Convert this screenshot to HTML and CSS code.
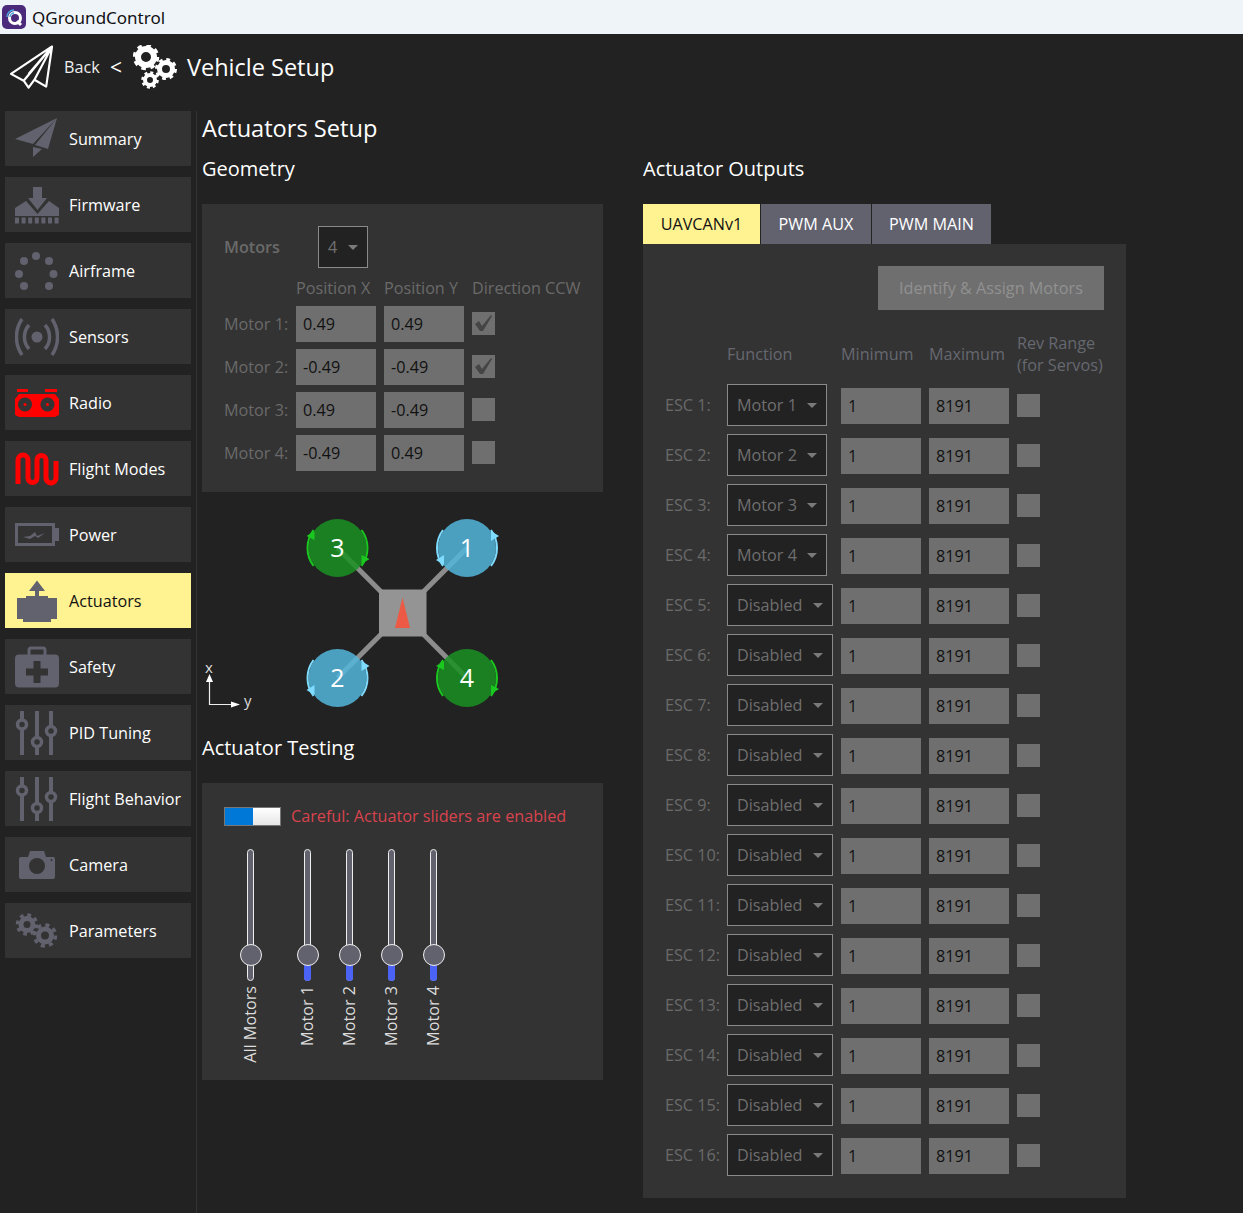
FILE: index.html
```html
<!DOCTYPE html>
<html lang="en">
<head>
  <meta charset="UTF-8">
  <meta name="viewport" content="width=device-width, initial-scale=1.0">
  <title>QGroundControl</title>
  <link rel="stylesheet" href="styles.css">
</head>
<body>

  <!-- window title -->
  <div class="titlebar">
    <svg class="app-logo" viewBox="0 0 24 24">
      <rect width="24" height="24" rx="5" fill="#4b2a7b"/>
      <circle cx="13" cy="13" r="5.5" fill="none" stroke="#fff" stroke-width="3"/>
      <path d="M15 16l4 4" stroke="#fff" stroke-width="3"/>
      <path d="M5 12a7 7 0 0 1 7-7M8 12a4 4 0 0 1 4-4" fill="none" stroke="#4aa8e0" stroke-width="1.5"/>
    </svg>
    <span>QGroundControl</span>
  </div>

  <!-- top toolbar -->
  <div class="toolbar">
    <svg class="toolbar-icon" viewBox="10 45 45 45">
      <path d="M53 46L11 74l13 7 5 7 6-8 12 7zM53 46L24 81M53 46L35 80M53 46L29 74" fill="none" stroke="#fff" stroke-width="2.2" stroke-linejoin="round"/>
    </svg>
    <span class="back">Back</span>
    <span class="chevron">&lt;</span>
    <svg class="toolbar-icon gears" viewBox="133 45 44 45">
      <circle cx="146" cy="57" r="8" fill="none" stroke="#fff" stroke-width="6"/>
      <circle cx="146" cy="57" r="11.5" fill="none" stroke="#fff" stroke-width="3.5" stroke-dasharray="4.5 4.53"/>
      <circle cx="166" cy="69" r="6.5" fill="none" stroke="#fff" stroke-width="5"/>
      <circle cx="166" cy="69" r="9.5" fill="none" stroke="#fff" stroke-width="3" stroke-dasharray="3.7 3.76"/>
      <circle cx="150" cy="80" r="5" fill="none" stroke="#fff" stroke-width="4"/>
      <circle cx="150" cy="80" r="7.5" fill="none" stroke="#fff" stroke-width="2.6" stroke-dasharray="3 2.89"/>
    </svg>
    <span class="toolbar-title">Vehicle Setup</span>
  </div>

  <div class="content">

    <div class="sidebar">
      <div class="nav-item">
        <svg class="nav-icon" viewBox="0 0 44 44"><path d="M42 1L0 22l18 5zM42 1L20 28l13 4zM18 30l9 2-9 8z"/></svg>
        <span>Summary</span>
      </div>
      <div class="nav-item">
        <svg class="nav-icon" viewBox="0 0 44 44"><path d="M18 4h9v11h5L22.500 27 13 15h5z"/><path d="M0 25l11-7 11.500 13L34 18l10 7v8H0z"/><path d="M0 37.500h44" stroke="#62616e" stroke-width="6" stroke-dasharray="4 2.600"/></svg>
        <span>Firmware</span>
      </div>
      <div class="nav-item">
        <svg class="nav-icon" viewBox="0 0 44 44">
          <circle cx="21" cy="7" r="4"/><circle cx="34" cy="12" r="4"/><circle cx="38.500" cy="25" r="4"/><circle cx="34" cy="37" r="4"/>
          <circle cx="9" cy="37" r="4"/><circle cx="4" cy="25" r="4"/><circle cx="9" cy="12" r="4"/>
        </svg>
        <span>Airframe</span>
      </div>
      <div class="nav-item">
        <svg class="nav-icon" viewBox="0 0 44 44">
          <circle cx="22" cy="22" r="5.500"/>
          <path d="M14 10a18 18 0 0 0 0 24M30 10a18 18 0 0 1 0 24M7 4a32 32 0 0 0 0 36M37 4a32 32 0 0 1 0 36" fill="none" stroke="#62616e" stroke-width="3.500"/>
        </svg>
        <span>Sensors</span>
      </div>
      <div class="nav-item">
        <svg class="nav-icon" viewBox="0 0 44 44">
          <path class="red" d="M2 8h11v3H2zM30 8h12v3H30zM4 13h36l4 5v16l-4 2H4l-4-2V18z"/>
          <circle cx="10" cy="23.500" r="7" fill="#333"/><circle cx="32.500" cy="23.500" r="7" fill="#333"/>
          <circle class="red" cx="10" cy="23.500" r="1.500"/><circle class="red" cx="32.500" cy="23.500" r="1.500"/>
        </svg>
        <span>Radio</span>
      </div>
      <div class="nav-item">
        <svg class="nav-icon" viewBox="0 0 44 44"><path d="M3 37V13a5 5 0 0 1 10 0V31a4.500 4.500 0 0 0 9 0V13a4.500 4.500 0 0 1 9 0V31a5 5 0 0 0 10 0V14" fill="none" stroke="#f00" stroke-width="5"/></svg>
        <span>Flight Modes</span>
      </div>
      <div class="nav-item">
        <svg class="nav-icon" viewBox="0 0 44 44">
          <path d="M0 10h40v5h4v13h-4v5H0zM3 13v17h34V13z" fill-rule="evenodd"/>
          <path d="M8 24l7-1 5-4 2 4 8-3-7 5-3-2-5 3z"/>
        </svg>
        <span>Power</span>
      </div>
      <div class="nav-item active">
        <svg class="nav-icon" viewBox="0 0 44 44"><path d="M22 1.500L30 12h-6v5h9v2h9v21h-6v3H8v-3H2V19h9v-2h9v-5h-6z"/></svg>
        <span>Actuators</span>
      </div>
      <div class="nav-item">
        <svg class="nav-icon" viewBox="0 0 44 44">
          <path d="M14 10V5a2 2 0 0 1 2-2h12a2 2 0 0 1 2 2v5" fill="none" stroke="#62616e" stroke-width="3"/>
          <rect y="9.500" width="44" height="33" rx="4"/>
          <path d="M18.500 16h7v7.500H33v7h-7.500V38h-7v-7.500H11v-7h7.500z" fill="#333"/>
        </svg>
        <span>Safety</span>
      </div>
      <div class="nav-item">
        <svg class="nav-icon" viewBox="0 0 44 44">
          <path class="line" d="M7 1v43M22 1v43M36 1v43"/>
          <circle class="knob" cx="7" cy="13.500" r="4.500"/><circle class="knob" cx="22" cy="31" r="4.500"/><circle class="knob" cx="36" cy="20" r="4.500"/>
        </svg>
        <span>PID Tuning</span>
      </div>
      <div class="nav-item">
        <svg class="nav-icon" viewBox="0 0 44 44">
          <path class="line" d="M7 1v43M22 1v43M36 1v43"/>
          <circle class="knob" cx="7" cy="13.500" r="4.500"/><circle class="knob" cx="22" cy="31" r="4.500"/><circle class="knob" cx="36" cy="20" r="4.500"/>
        </svg>
        <span>Flight Behavior</span>
      </div>
      <div class="nav-item">
        <svg class="nav-icon" viewBox="0 0 44 44">
          <path d="M6 14h7l2-6h14l2 6h7a2 2 0 0 1 2 2v18a2 2 0 0 1-2 2H6a2 2 0 0 1-2-2V16a2 2 0 0 1 2-2z"/>
          <circle cx="22" cy="23" r="8" fill="#333"/><circle cx="36.500" cy="17" r="1" fill="#333"/>
        </svg>
        <span>Camera</span>
      </div>
      <div class="nav-item">
        <svg class="nav-icon" viewBox="0 0 44 44">
          <g fill="none" stroke="#62616e">
            <circle cx="12" cy="15.500" r="6" stroke-width="5"/>
            <circle cx="12" cy="15.500" r="9.500" stroke-width="3.500" stroke-dasharray="3.700 3.760"/>
            <circle cx="30" cy="26.500" r="6.500" stroke-width="5"/>
            <circle cx="30" cy="26.500" r="10.500" stroke-width="3.500" stroke-dasharray="4.100 4.150"/>
          </g>
        </svg>
        <span>Parameters</span>
      </div>
    </div>

    <div class="main">
      <h1>Actuators Setup</h1>
      <div class="columns">

        <div class="col-left">
          <h2>Geometry</h2>
          <div class="panel geometry">
            <div class="motors-row">
              <span class="motors-label">Motors</span>
              <div class="select select-count"><span>4</span><i class="caret"></i></div>
            </div>
            <div class="geo-grid">
              <span></span><span class="muted">Position X</span><span class="muted">Position Y</span><span class="muted">Direction CCW</span>

              <span class="muted">Motor 1:</span>
              <input class="field" type="text" value="0.49" readonly>
              <input class="field" type="text" value="0.49" readonly>
              <span class="check"><svg viewBox="0 0 23 23"><path d="M3 12l4-3 3 5L19 3l1 1-9 15H8z"/></svg></span>

              <span class="muted">Motor 2:</span>
              <input class="field" type="text" value="-0.49" readonly>
              <input class="field" type="text" value="-0.49" readonly>
              <span class="check"><svg viewBox="0 0 23 23"><path d="M3 12l4-3 3 5L19 3l1 1-9 15H8z"/></svg></span>

              <span class="muted">Motor 3:</span>
              <input class="field" type="text" value="0.49" readonly>
              <input class="field" type="text" value="-0.49" readonly>
              <span class="check"></span>

              <span class="muted">Motor 4:</span>
              <input class="field" type="text" value="-0.49" readonly>
              <input class="field" type="text" value="0.49" readonly>
              <span class="check"></span>
            </div>
          </div>

          <!-- multirotor diagram, coordinates are page pixels -->
          <svg class="diagram" viewBox="202 500 401 226">
            <defs>
              <g id="spin-ccw">
                <path d="M-24 -18A30 30 0 0 0 -24 18M24 -18A30 30 0 0 1 24 18" fill="none" stroke-width="2"/>
                <path d="M-23 -17L-31 -12-23 -8zM24 7L32 11 24 16z" stroke="none"/>
              </g>
              <g id="spin-cw">
                <path d="M-24 -18A30 30 0 0 0 -24 18M24 -18A30 30 0 0 1 24 18" fill="none" stroke-width="2"/>
                <path d="M24 -17L32 -12 24 -7zM-23 7L-31 12-23 17z" stroke="none"/>
              </g>
            </defs>
            <path d="M337.500 548L467 678M467 548L337.500 678" stroke="#8c8c8c" stroke-width="5"/>
            <rect x="379" y="589.500" width="47.500" height="47" fill="#949494"/>
            <path d="M402.500 597.500L410 628H395z" fill="#ec5a45"/>
            <circle cx="337.500" cy="548" r="29" fill="#1a9122" fill-opacity=".85"/>
            <circle cx="467" cy="548" r="29" fill="#52b6dc" fill-opacity=".85"/>
            <circle cx="337.500" cy="678" r="29" fill="#52b6dc" fill-opacity=".85"/>
            <circle cx="467" cy="678" r="29" fill="#1a9122" fill-opacity=".85"/>
            <use href="#spin-ccw" x="337.500" y="548" fill="#1ac81f" stroke="#1ac81f"/>
            <use href="#spin-cw" x="467" y="548" fill="#7fdcff" stroke="#7fdcff"/>
            <use href="#spin-cw" x="337.500" y="678" fill="#7fdcff" stroke="#7fdcff"/>
            <use href="#spin-ccw" x="467" y="678" fill="#1ac81f" stroke="#1ac81f"/>
            <g class="motor-num">
              <text x="337.500" y="557">3</text>
              <text x="467" y="557">1</text>
              <text x="337.500" y="687">2</text>
              <text x="467" y="687">4</text>
            </g>
            <path d="M209.500 678V704.500H232" fill="none" stroke="#eee" stroke-width="1.200"/>
            <path d="M209.500 674L213 682H206zM240 704.500L231 701.500V707.500z" fill="#fff"/>
            <text class="axis" x="205" y="673">x</text>
            <text class="axis" x="244" y="706">y</text>
          </svg>

          <h2 class="testing-title">Actuator Testing</h2>
          <div class="panel testing">
            <div class="switch-row">
              <div class="switch"><span class="switch-on"></span><span class="switch-off"></span></div>
              <span class="warning">Careful: Actuator sliders are enabled</span>
            </div>
            <div class="sliders">
              <div class="slider all">
                <div class="track"><span class="knob-handle"></span></div>
                <span class="slider-label">All Motors</span>
              </div>
              <div class="slider">
                <div class="track"><span class="track-fill"></span><span class="knob-handle"></span></div>
                <span class="slider-label">Motor 1</span>
              </div>
              <div class="slider">
                <div class="track"><span class="track-fill"></span><span class="knob-handle"></span></div>
                <span class="slider-label">Motor 2</span>
              </div>
              <div class="slider">
                <div class="track"><span class="track-fill"></span><span class="knob-handle"></span></div>
                <span class="slider-label">Motor 3</span>
              </div>
              <div class="slider">
                <div class="track"><span class="track-fill"></span><span class="knob-handle"></span></div>
                <span class="slider-label">Motor 4</span>
              </div>
            </div>
          </div>
        </div>

        <div class="col-right">
          <h2>Actuator Outputs</h2>
          <div class="tabs">
            <span class="tab tab-active">UAVCANv1</span>
            <span class="tab tab-aux">PWM AUX</span>
            <span class="tab tab-main">PWM MAIN</span>
          </div>
          <div class="panel outputs">
            <div class="button-row"><button type="button" class="identify">Identify &amp; Assign Motors</button></div>
            <div class="out-grid">
              <span></span><span class="muted-blue">Function</span><span class="muted-blue">Minimum</span><span class="muted-blue">Maximum</span><span class="muted-blue rev">Rev Range<br>(for Servos)</span>

              <span class="muted">ESC 1:</span>
              <div class="select select-motor"><span>Motor 1</span><i class="caret"></i></div>
              <input class="field" type="text" value="1" readonly><input class="field" type="text" value="8191" readonly><span class="check"></span>

              <span class="muted">ESC 2:</span>
              <div class="select select-motor"><span>Motor 2</span><i class="caret"></i></div>
              <input class="field" type="text" value="1" readonly><input class="field" type="text" value="8191" readonly><span class="check"></span>

              <span class="muted">ESC 3:</span>
              <div class="select select-motor"><span>Motor 3</span><i class="caret"></i></div>
              <input class="field" type="text" value="1" readonly><input class="field" type="text" value="8191" readonly><span class="check"></span>

              <span class="muted">ESC 4:</span>
              <div class="select select-motor"><span>Motor 4</span><i class="caret"></i></div>
              <input class="field" type="text" value="1" readonly><input class="field" type="text" value="8191" readonly><span class="check"></span>

              <span class="muted">ESC 5:</span>
              <div class="select"><span>Disabled</span><i class="caret"></i></div>
              <input class="field" type="text" value="1" readonly><input class="field" type="text" value="8191" readonly><span class="check"></span>

              <span class="muted">ESC 6:</span>
              <div class="select"><span>Disabled</span><i class="caret"></i></div>
              <input class="field" type="text" value="1" readonly><input class="field" type="text" value="8191" readonly><span class="check"></span>

              <span class="muted">ESC 7:</span>
              <div class="select"><span>Disabled</span><i class="caret"></i></div>
              <input class="field" type="text" value="1" readonly><input class="field" type="text" value="8191" readonly><span class="check"></span>

              <span class="muted">ESC 8:</span>
              <div class="select"><span>Disabled</span><i class="caret"></i></div>
              <input class="field" type="text" value="1" readonly><input class="field" type="text" value="8191" readonly><span class="check"></span>

              <span class="muted">ESC 9:</span>
              <div class="select"><span>Disabled</span><i class="caret"></i></div>
              <input class="field" type="text" value="1" readonly><input class="field" type="text" value="8191" readonly><span class="check"></span>

              <span class="muted">ESC 10:</span>
              <div class="select"><span>Disabled</span><i class="caret"></i></div>
              <input class="field" type="text" value="1" readonly><input class="field" type="text" value="8191" readonly><span class="check"></span>

              <span class="muted">ESC 11:</span>
              <div class="select"><span>Disabled</span><i class="caret"></i></div>
              <input class="field" type="text" value="1" readonly><input class="field" type="text" value="8191" readonly><span class="check"></span>

              <span class="muted">ESC 12:</span>
              <div class="select"><span>Disabled</span><i class="caret"></i></div>
              <input class="field" type="text" value="1" readonly><input class="field" type="text" value="8191" readonly><span class="check"></span>

              <span class="muted">ESC 13:</span>
              <div class="select"><span>Disabled</span><i class="caret"></i></div>
              <input class="field" type="text" value="1" readonly><input class="field" type="text" value="8191" readonly><span class="check"></span>

              <span class="muted">ESC 14:</span>
              <div class="select"><span>Disabled</span><i class="caret"></i></div>
              <input class="field" type="text" value="1" readonly><input class="field" type="text" value="8191" readonly><span class="check"></span>

              <span class="muted">ESC 15:</span>
              <div class="select"><span>Disabled</span><i class="caret"></i></div>
              <input class="field" type="text" value="1" readonly><input class="field" type="text" value="8191" readonly><span class="check"></span>

              <span class="muted">ESC 16:</span>
              <div class="select"><span>Disabled</span><i class="caret"></i></div>
              <input class="field" type="text" value="1" readonly><input class="field" type="text" value="8191" readonly><span class="check"></span>
            </div>
          </div>
        </div>

      </div>
    </div>
  </div>

</body>
</html>
```

FILE: styles.css
```css
html, body {
  margin: 0;
  height: 1213px;
  overflow: hidden;
}

body {
  background-color: #222;
  color: #fff;
  font-family: "Open Sans", sans-serif;
  font-size: 16.2px;
}

.titlebar {
  display: flex;
  align-items: center;
  gap: 6px;
  height: 34px;
  padding-left: 2px;
  background-color: #eff4f9;
  color: #111;
  font-family: "Noto Sans", sans-serif;
  font-size: 17px;
}

.app-logo {
  width: 24px;
  height: 24px;
}

.toolbar {
  display: flex;
  align-items: center;
  height: 66px;
  padding-left: 10px;
}

.toolbar-icon {
  width: 44px;
  height: 45px;
}

.back {
  width: 36px;
  margin-left: 10px;
  color: #eee;
}

.chevron {
  width: 12px;
  margin: 0 11px 0 10px;
  font-size: 21px;
  line-height: 1;
}

.toolbar-title {
  margin-left: 10px;
  font-size: 23.5px;
}

.content {
  display: flex;
  padding-top: 11px;
}

.sidebar {
  display: flex;
  flex-direction: column;
  gap: 11px;
  width: 186px;
  height: 1102px;
  margin-left: 5px;
  padding-right: 5px;
  border-right: 1px solid #333;
}

.nav-item {
  display: flex;
  align-items: center;
  gap: 10px;
  height: 55px;
  padding-left: 10px;
  background-color: #333;
}

.nav-item.active {
  background-color: #fff291;
  color: #111;
}

.nav-icon {
  width: 44px;
  height: 44px;
  fill: #62616e;
}

.nav-icon .red {
  fill: #f00;
}

.nav-icon .line {
  fill: none;
  stroke: #62616e;
  stroke-width: 4;
  stroke-linecap: round;
}

.nav-icon .knob {
  fill: #333;
  stroke: #62616e;
  stroke-width: 3.5;
}

.main {
  padding-left: 5px;
}

h1 {
  margin: 0;
  height: 36px;
  font-size: 23.6px;
  font-weight: 400;
  line-height: 34px;
}

h2 {
  margin: 7px 0 20px;
  height: 30px;
  font-size: 20px;
  font-weight: 400;
  line-height: 30px;
}

.columns {
  display: grid;
  grid-template-columns: 401px 483px;
  column-gap: 40px;
}

.panel {
  background-color: #333;
}

.muted {
  color: #6a6a6a;
  line-height: 22px;
  white-space: nowrap;
}

.muted-blue {
  align-self: center;
  color: #666870;
  line-height: 22px;
  white-space: nowrap;
}

.geometry {
  padding: 22px 22px 21px;
}

.motors-row {
  display: flex;
  align-items: center;
  margin-bottom: 9px;
}

.motors-label {
  width: 94px;
  color: #6a6a6a;
  font-weight: 600;
}

.geo-grid {
  display: grid;
  grid-template-columns: 64px 80px 80px auto;
  grid-auto-rows: 36px;
  grid-template-rows: 22px;
  gap: 7px 8px;
  align-items: center;
}

.geo-grid .check {
  margin-bottom: 1px;
}

.select {
  display: flex;
  align-items: center;
  justify-content: space-between;
  box-sizing: border-box;
  width: 106px;
  height: 42px;
  padding: 0 9px;
  background-color: #222;
  border: 1px solid #8a8a8a;
  color: #6f6f6f;
}

.select-count {
  width: 50px;
}

.select-motor {
  width: 100px;
}

.caret {
  width: 0;
  height: 0;
  border-left: 5px solid transparent;
  border-right: 5px solid transparent;
  border-top: 5px solid #7a7a7a;
}

.field {
  box-sizing: border-box;
  width: 80px;
  height: 36px;
  margin: 0;
  padding: 0 7px;
  background-color: #6f6f6f;
  border: none;
  border-radius: 0;
  color: #111;
  font-family: inherit;
  font-size: 16.2px;
}

.out-grid .field {
  margin-top: 2px;
}

.check {
  display: block;
  width: 23px;
  height: 23px;
  background-color: #6f6f6f;
}

.check svg {
  display: block;
  width: 23px;
  height: 23px;
  fill: #454545;
}

.diagram {
  display: block;
  width: 401px;
  height: 226px;
  margin-top: 8px;
}

.motor-num text {
  fill: #fff;
  font-size: 25px;
  text-anchor: middle;
}

.axis {
  fill: #ddd;
  font-size: 15px;
}

.testing {
  box-sizing: border-box;
  height: 297px;
  padding: 22px;
}

.switch-row {
  display: flex;
  align-items: center;
  gap: 10px;
}

.switch {
  display: flex;
  box-sizing: border-box;
  width: 57px;
  height: 19px;
  border: 1px solid #777;
}

.switch-on {
  flex: 1;
  background-color: #0078d7;
}

.switch-off {
  flex: 1;
  background: linear-gradient(#fff, #e6e6e6);
}

.warning {
  color: #d9434e;
}

.sliders {
  display: flex;
  gap: 20px;
  margin: 22px 0 0 16px;
}

.slider {
  display: flex;
  flex-direction: column;
  align-items: center;
  width: 22px;
}

.slider.all {
  margin-right: 15px;
}

.track {
  position: relative;
  box-sizing: border-box;
  width: 7px;
  height: 132px;
  margin-right: 1px;
  background-color: #62616e;
  border: 1px solid #eee;
  border-radius: 4px;
}

.track-fill {
  position: absolute;
  left: -1px;
  right: -1px;
  bottom: -1px;
  height: 26px;
  background-color: #4a63f5;
  border-radius: 0 0 4px 4px;
}

.knob-handle {
  position: absolute;
  left: -8px;
  top: 93.5px;
  box-sizing: border-box;
  width: 22px;
  height: 22px;
  background-color: #62616e;
  border: 1px solid #eee;
  border-radius: 50%;
}

.slider-label {
  margin: 5px 2px 0 0;
  color: #ddd;
  line-height: 18px;
  white-space: nowrap;
  writing-mode: vertical-rl;
  transform: rotate(180deg);
}

.tabs {
  display: flex;
  gap: 1px;
  height: 40px;
}

.tab {
  display: flex;
  align-items: center;
  justify-content: center;
  box-sizing: border-box;
  width: 117px;
  background-color: #62616e;
}

.tab-aux {
  width: 110px;
}

.tab-main {
  width: 119px;
}

.tab-active {
  background-color: #fff291;
  color: #111;
}

.outputs {
  padding: 22px;
}

.button-row {
  display: flex;
  justify-content: flex-end;
  margin-bottom: 22px;
}

.identify {
  width: 226px;
  height: 44px;
  padding: 0;
  background-color: #6f6f6f;
  border: none;
  color: #919191;
  font-family: inherit;
  font-size: 16.2px;
}

.out-grid {
  display: grid;
  grid-template-columns: 54px 106px 80px 80px auto;
  grid-auto-rows: 42px;
  grid-template-rows: 44px;
  gap: 8px;
  align-items: center;
}
```
